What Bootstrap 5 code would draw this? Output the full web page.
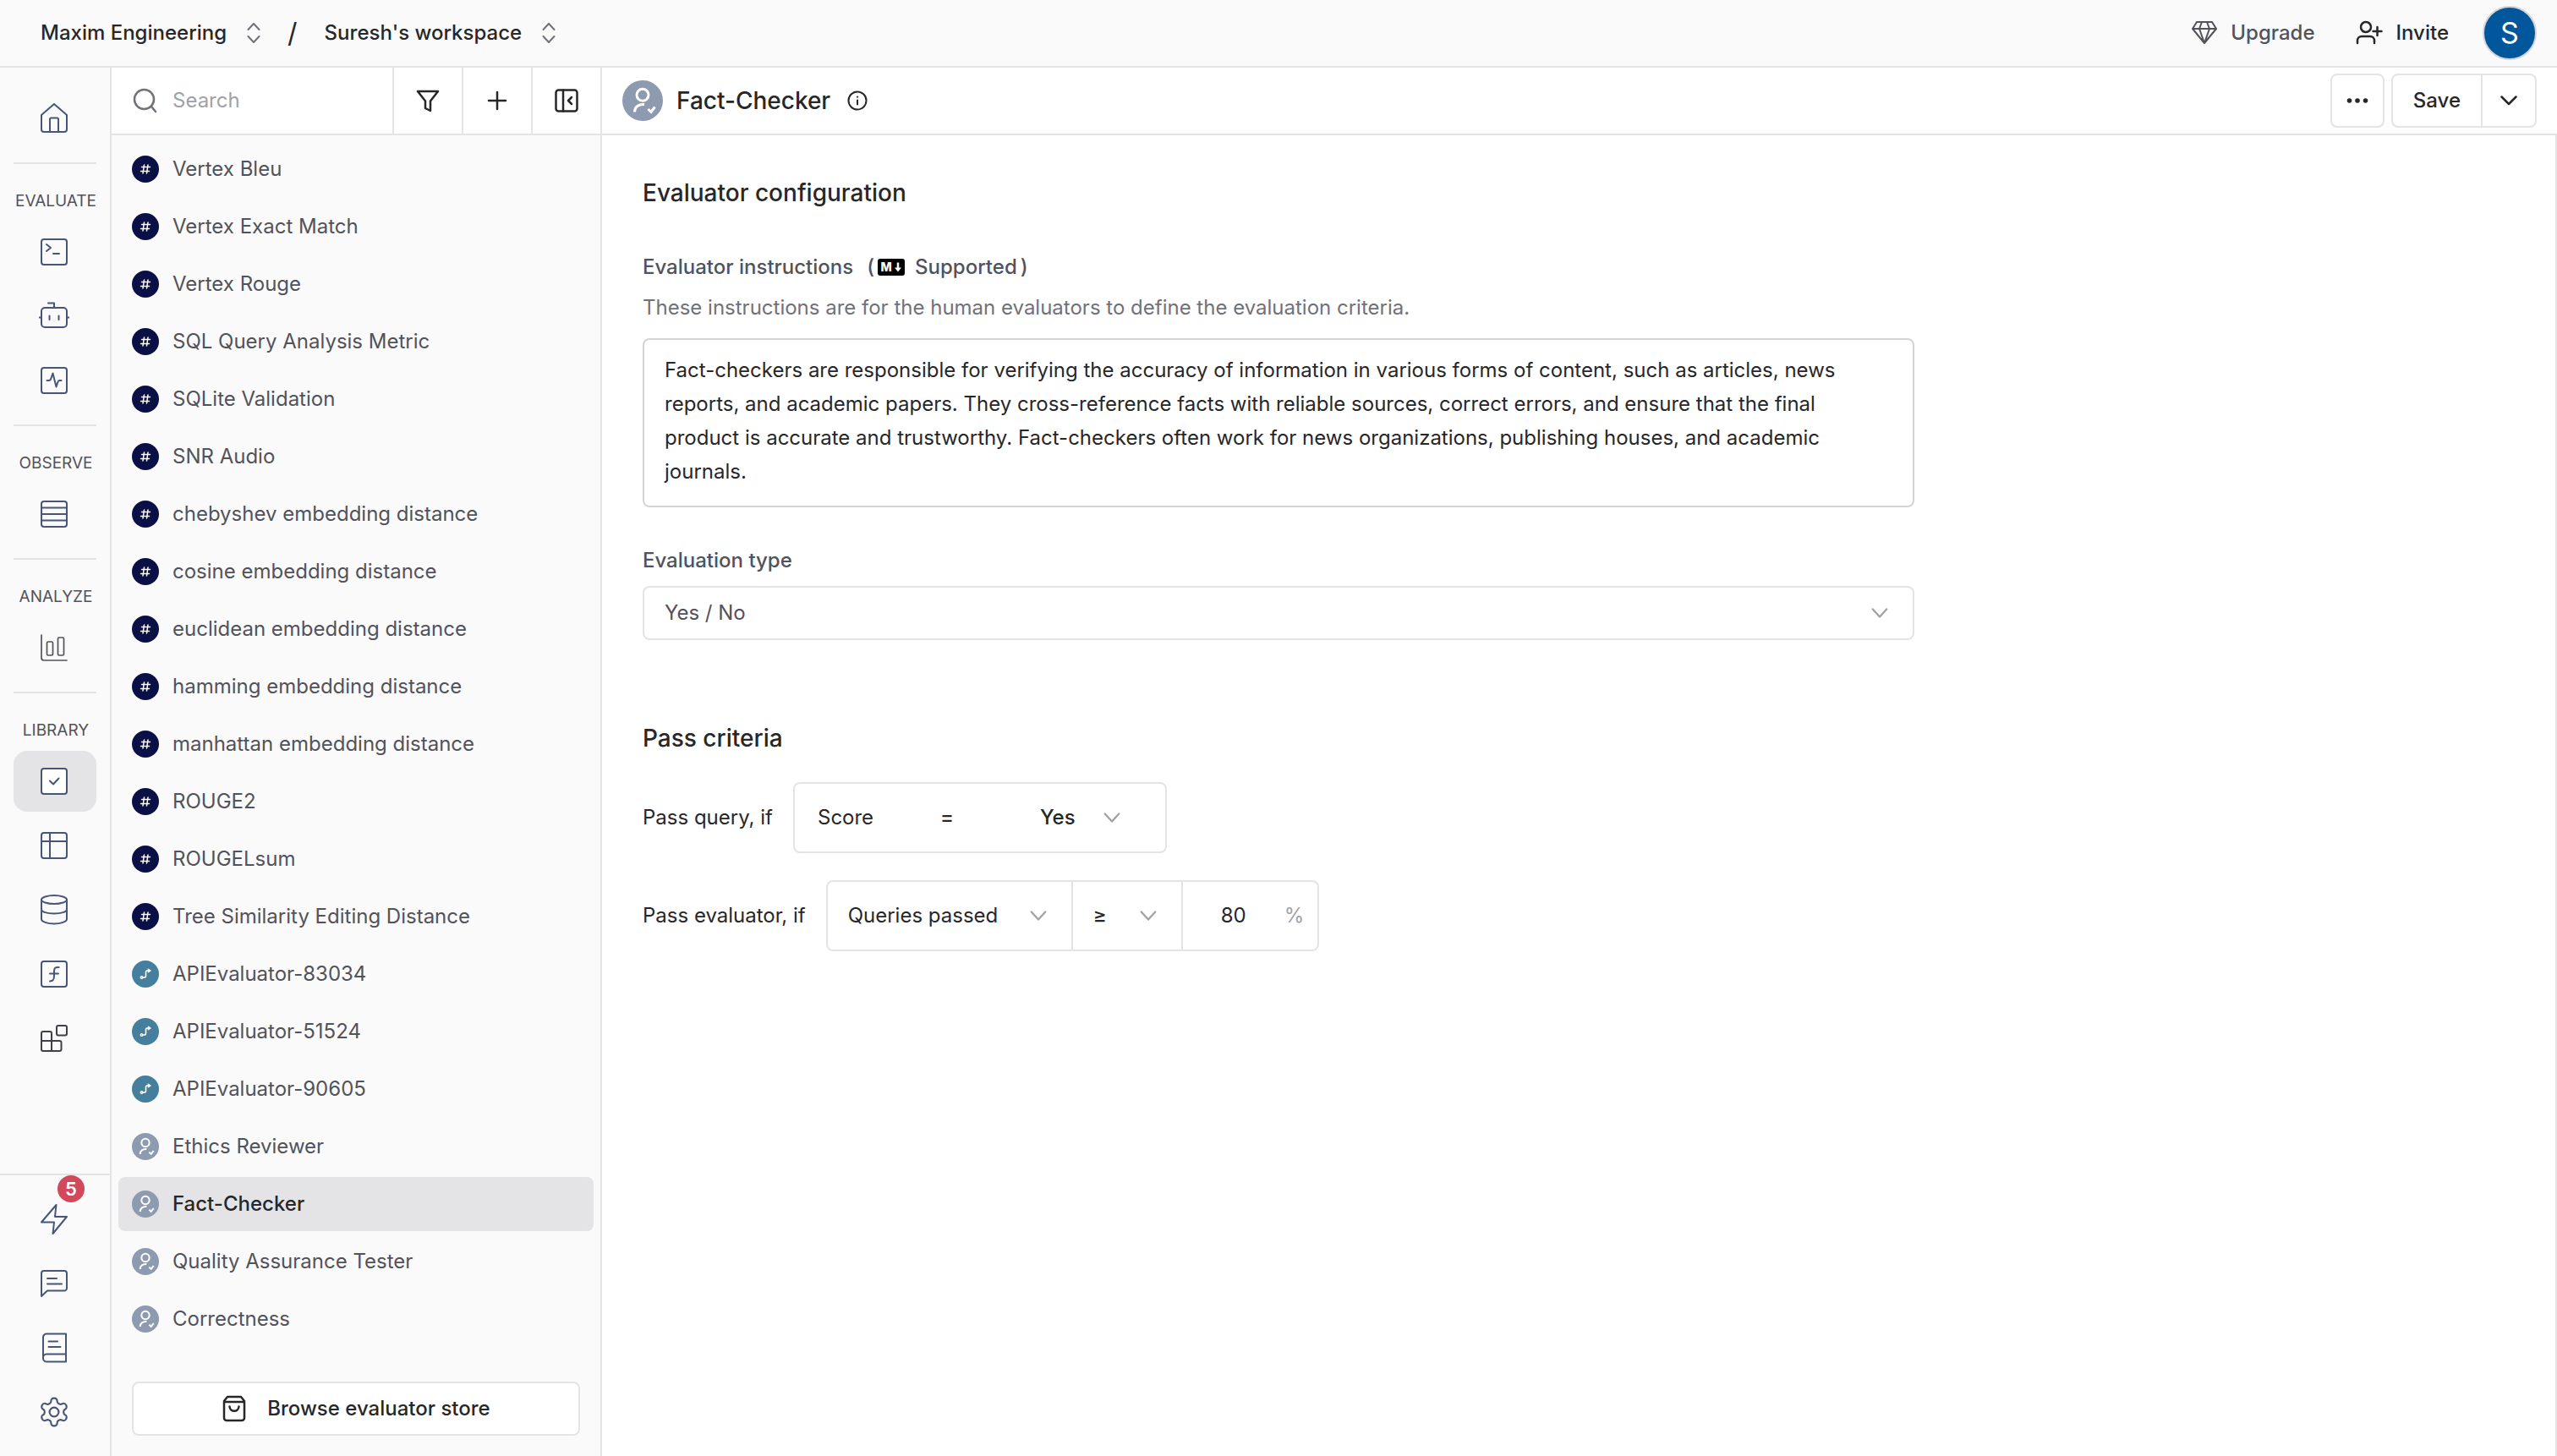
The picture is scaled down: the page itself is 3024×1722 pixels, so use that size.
<!DOCTYPE html>
<html lang="en">
<head>
<meta charset="utf-8">
<meta name="viewport" content="width=device-width, initial-scale=1">
<title>Fact-Checker</title>
<link href="https://cdn.jsdelivr.net/npm/bootstrap@5.3.0/dist/css/bootstrap.min.css" rel="stylesheet">
<script src="https://cdn.jsdelivr.net/npm/bootstrap@5.3.0/dist/js/bootstrap.bundle.min.js"></script>
<style>
:root{--line:#e4e4e7;--ink:#27272a;--soft:#52525b;--mute:#71717a;--faint:#a1a1aa;--shade:#fafafa}
body{font-family:Inter,"Liberation Sans",sans-serif;font-size:24px;line-height:40px;color:var(--ink);background:#fff}
a,a:hover{color:inherit;text-decoration:none}
svg{flex:none;fill:none;stroke:currentColor;stroke-linecap:round;stroke-linejoin:round}
svg:not([stroke-width]){stroke-width:2}
button{border:0;background:none;color:inherit;padding:0}
.fw-medium{font-weight:500}
.topbar{height:80px;background:var(--shade);border-bottom:2px solid var(--line);padding:0 24px 0 48px}
.crumb{gap:24px}
.crumb svg{color:var(--mute)}
.slash{font-size:32px;margin:0 32px}
.act{gap:16px}
.avatar-s{width:64px;height:64px;margin-left:40px;border-radius:50%;background:#01579b;border:2px solid #d4d4d8;color:#fff;font-size:34px;line-height:60px}
.rail{width:132px;background:var(--shade);border-right:2px solid var(--line);color:#475577}
.rail-nav{padding:24px 16px 0}
.rail-foot{padding:16px;border-top:2px solid var(--line)}
.rail-link{height:72px;border-radius:16px;padding-right:2px}
.rail-link svg{width:36px;height:36px}
.rail-link.active{background:var(--line)}
.rail-link.dark{color:#3f3f46}
.rail-cap{border-top:2px solid var(--line);margin-top:16px;padding:28px 0 8px 2px;font-size:19px;line-height:32px;color:var(--soft);white-space:nowrap}
.count{left:52px;top:-16px;width:32px;height:32px;border-radius:50%;background:#d1495b;color:#fff;font-size:22px;line-height:32px;font-weight:600}
.side{width:580px;background:var(--shade);border-right:2px solid var(--line)}
.bar{height:80px;background:#fff;border-bottom:2px solid var(--line)}
.search-box{min-width:0}
.search-in{border:0;outline:0;background:none;width:100%;min-width:0;padding:0;color:var(--ink)}
.search-in::placeholder{color:var(--faint);opacity:1}
.tool{border-left:2px solid var(--line);flex:none;width:82px}
.tool.slim{width:64px}
.evals{padding:8px 8px 0;gap:4px}
.eval{height:64px;border-radius:8px;padding:0 16px;gap:16px;color:var(--soft)}
.eval.active{background:var(--line);color:var(--ink);font-weight:500}
.dot{width:32px;height:32px;border-radius:50%;color:#fff;background:#0a1045}
.dot svg{width:32px;height:32px}
.dot.api{background:#457f9d}
.dot.human{background:#8e9aaf}
.dot.human svg{stroke-width:3}
.dot.big,.dot.big svg{width:48px;height:48px}
.box{border:2px solid var(--line);border-radius:8px;background:#fff}
.store{height:64px;margin:0 24px 24px;gap:24px}
.h-sec{font-size:28px;line-height:40px;font-weight:500;margin:0}
.head-pad{padding:0 24px}
.info{margin-left:20px}
.square{width:64px;height:64px}
.tall{height:64px}
.sheet{padding:48px;border-right:2px solid var(--line)}
.form-col{max-width:1504px}
.lab{color:var(--soft);font-weight:500}
.lab-first{margin-top:48px}
.lab-type{margin:43px 0 10px}
.hint{margin-top:8px;color:var(--mute)}
.sec-two{margin-top:96px}
.rule-row{margin-top:32px}
.md{background:#000;color:#fff;width:32px;height:20px;border-radius:3px;font-size:14px;line-height:20px;font-weight:800;margin:0 12px 0 4px;gap:2px}
.form-control.note{border:2px solid #d4d4d8;border-radius:8px;padding:16px 24px 20px;font-size:24px;line-height:40px;color:var(--ink);resize:none;height:200px}
.form-select.pick{--bs-form-select-bg-img:url("data:image/svg+xml,%3Csvg xmlns='http://www.w3.org/2000/svg' viewBox='0 0 24 24'%3E%3Cpath fill='none' stroke='%23a1a1aa' stroke-width='2.5' stroke-linecap='round' stroke-linejoin='round' d='m3 7 9 10 9-10'/%3E%3C/svg%3E");background-size:22px;background-color:transparent;font-size:24px;line-height:40px;color:var(--ink);border:0;border-radius:0;padding:0 48px 0 24px;background-position:right 28px center;width:auto}
.form-select.pick.type{width:100%;height:64px;border:2px solid var(--line);border-radius:8px;color:var(--soft)}
.form-select.pick.answer{width:172px;background-position:right 52px center}
.form-select.pick.metric{width:288px}
.form-select.pick.cmp{width:130px}
.rule{height:84px;overflow:hidden}
.rule-cell+.rule-cell{border-left:2px solid var(--line)}
.w-score{padding-left:27px;width:172px}
.w-eq{width:94px}
.num{border:0;outline:0;width:120px;padding:0;text-align:center;background:none;color:var(--ink)}
.pct{color:var(--faint)}
</style>
</head>
<body>
<svg class="d-none" aria-hidden="true">
<symbol id="i-hash" viewBox="0 0 32 32"><path d="M11.500 13.500h10M10.500 18.500h10M14.500 11l-1.500 10M19 11l-1.500 10" stroke-width="1.500"/></symbol>
<symbol id="i-api" viewBox="0 0 32 32"><circle cx="11.500" cy="20" r="1.300" stroke-width="1.400"/><path d="M13 20h2c1 0 1.500-.5 1.500-1.500v-5c0-1 .5-1.500 1.500-1.500h2" stroke-width="1.600"/><path d="m19.500 10 3 2-3 2z" fill="currentColor" stroke-width=".8"/></symbol>
<symbol id="i-human" viewBox="0 0 48 48"><circle cx="24" cy="17.300" r="7"/><path d="M14.500 37.500c0-6 5-9.500 11.500-9M30.500 34l3.500 3.500 4.500-6" stroke-linecap="butt" stroke-linejoin="miter"/></symbol>
<symbol id="i-updown" viewBox="0 0 16 24"><path d="m1.500 8 6.500-7 6.500 7M1.500 16l6.500 7 6.500-7"/></symbol>
</svg>

<div class="d-flex flex-column vh-100">
  <header class="topbar d-flex align-items-center">
    <button class="crumb d-flex align-items-center fw-medium">Maxim Engineering <svg width="16" height="24"><use href="#i-updown"/></svg></button>
    <span class="slash">/</span>
    <button class="crumb d-flex align-items-center fw-medium">Suresh's workspace <svg width="16" height="24"><use href="#i-updown"/></svg></button>
    <div class="d-flex align-items-center ms-auto">
      <button class="act d-flex align-items-center lab me-5"><svg width="30" height="30" viewBox="0 0 30 30"><path d="M6 2h18l5 8-14 17L1 10zM1 10h28M12 2l-3 8 6 17 6-17-3-8"/></svg>Upgrade</button>
      <button class="act d-flex align-items-center fw-medium"><svg width="32" height="30" viewBox="0 0 32 30" stroke-width="2.500"><circle cx="12" cy="8" r="6"/><path d="M2 27v-3a5 5 0 0 1 5-5h10a5 5 0 0 1 5 5v3M25.500 8v10M20.500 13h10"/></svg>Invite</button>
      <button class="avatar-s" aria-label="Account">S</button>
    </div>
  </header>

  <div class="d-flex flex-grow-1">
    <nav class="rail d-flex flex-column flex-shrink-0" aria-label="Main">
      <div class="rail-nav flex-grow-1">
        <a href="#" class="rail-link d-flex align-items-center justify-content-center" aria-label="Home"><svg viewBox="0 0 36 36"><path d="m18 1 15 13v17a3 3 0 0 1-3 3H6a3 3 0 0 1-3-3V14zM13 34V19a1.500 1.500 0 0 1 1.500-1.500h7A1.500 1.500 0 0 1 23 19v15"/></svg></a>
        <div class="rail-cap text-center">EVALUATE</div>
        <a href="#" class="rail-link d-flex align-items-center justify-content-center" aria-label="Prompts"><svg viewBox="0 0 36 36"><rect x="3" y="3" width="30" height="30" rx="3"/><path d="m9 9 5 4-5 4M17 20h7"/></svg></a>
        <a href="#" class="rail-link mt-1 d-flex align-items-center justify-content-center" aria-label="Agents"><svg viewBox="0 0 36 36"><rect x="3" y="8" width="30" height="23" rx="4"/><path d="M11 2.500h7V8M0 19.500h3M33 19.500h3M12.500 17.500v4.500M23.500 17.500v4.500"/></svg></a>
        <a href="#" class="rail-link mt-1 d-flex align-items-center justify-content-center" aria-label="Runs"><svg viewBox="0 0 36 36"><rect x="3" y="3" width="30" height="30" rx="3"/><path d="M9.500 18h2.500c1 0 1.500-.5 2-1.500l2.500-7 4 16 2-6c.4-1 1-1.500 2-1.500h2"/></svg></a>
        <div class="rail-cap text-center">OBSERVE</div>
        <a href="#" class="rail-link d-flex align-items-center justify-content-center" aria-label="Logs"><svg viewBox="0 0 36 36"><rect x="3" y="3" width="30" height="30" rx="3"/><path d="M3 10.500h30M3 18h30M3 25.500h30"/></svg></a>
        <div class="rail-cap text-center">ANALYZE</div>
        <a href="#" class="rail-link d-flex align-items-center justify-content-center lab" aria-label="Dashboards"><svg viewBox="0 0 36 36" stroke-width="1.700"><path d="M3 3v27a3 3 0 0 0 3 3h27"/><rect x="9.500" y="11" width="7" height="16" rx="1.500"/><rect x="22.500" y="6" width="7" height="21" rx="1.500"/></svg></a>
        <div class="rail-cap text-center">LIBRARY</div>
        <a href="#" class="rail-link active d-flex align-items-center justify-content-center" aria-label="Evaluators"><svg viewBox="0 0 36 36"><rect x="3" y="3" width="30" height="30" rx="3" fill="#fff"/><path d="m13 17.500 4 4 6.500-7"/></svg></a>
        <a href="#" class="rail-link mt-1 d-flex align-items-center justify-content-center" aria-label="Datasets"><svg viewBox="0 0 36 36"><rect x="3" y="3" width="30" height="30" rx="3"/><path d="M3 13h30M13 3v30"/></svg></a>
        <a href="#" class="rail-link mt-1 d-flex align-items-center justify-content-center" aria-label="Sources"><svg viewBox="0 0 36 36"><ellipse cx="18" cy="6" rx="15" ry="5"/><path d="M3 6v23c0 3 6.700 5.500 15 5.500S33 32 33 29V6M3 17.500c0 3 6.700 5 15 5s15-2 15-5"/></svg></a>
        <a href="#" class="rail-link mt-1 d-flex align-items-center justify-content-center" aria-label="Functions"><svg viewBox="0 0 36 36"><rect x="3" y="3" width="30" height="30" rx="3"/><path d="M23.500 10c-4-.6-5.500 1-5.500 4.500V20c0 4.500-1 6.500-5 6.500M13 17.500h10"/></svg></a>
        <a href="#" class="rail-link dark mt-1 d-flex align-items-center justify-content-center" aria-label="Tools"><svg viewBox="0 0 36 36"><rect x="21" y="3" width="12" height="11.500" rx="2"/><path d="M3 21v-9a2 2 0 0 1 2-2h8a2 2 0 0 1 2 2v21H5a2 2 0 0 1-2-2V21h21.500a2 2 0 0 1 2 2v8a2 2 0 0 1-2 2H15"/></svg></a>
      </div>
      <div class="rail-foot">
        <a href="#" class="rail-link position-relative d-flex align-items-center justify-content-center" aria-label="Activity, 5 new"><svg viewBox="0 0 36 36"><path d="M20.500 1 3 21.500h15L16.500 35 33 15H19z"/></svg><span class="count position-absolute text-center">5</span></a>
        <a href="#" class="rail-link mt-1 d-flex align-items-center justify-content-center" aria-label="Feedback"><svg viewBox="0 0 36 36"><path d="M3 33V6a3 3 0 0 1 3-3h24a3 3 0 0 1 3 3v17.500a3 3 0 0 1-3 3H10zM10 12h11M10 18.500h17"/></svg></a>
        <a href="#" class="rail-link mt-1 d-flex align-items-center justify-content-center" aria-label="Docs"><svg viewBox="0 0 36 36"><path d="M32 1.500H9a4 4 0 0 0-4 4V30a4 4 0 0 0 4 4.500h23zM5 30a4 4 0 0 1 4-4.500h23M11.500 10.500h10.500M11.500 17h14"/></svg></a>
        <a href="#" class="rail-link mt-1 d-flex align-items-center justify-content-center" aria-label="Settings"><svg viewBox="1 1.200 22 21.600" stroke-width="1.300"><path d="M12.220 2h-.44a2 2 0 0 0-2 2v.18a2 2 0 0 1-1 1.730l-.43.25a2 2 0 0 1-2 0l-.15-.08a2 2 0 0 0-2.730.73l-.22.38a2 2 0 0 0 .73 2.730l.15.1a2 2 0 0 1 1 1.720v.51a2 2 0 0 1-1 1.740l-.15.09a2 2 0 0 0-.73 2.730l.22.38a2 2 0 0 0 2.730.73l.15-.08a2 2 0 0 1 2 0l.43.25a2 2 0 0 1 1 1.730V20a2 2 0 0 0 2 2h.44a2 2 0 0 0 2-2v-.18a2 2 0 0 1 1-1.730l.43-.25a2 2 0 0 1 2 0l.15.08a2 2 0 0 0 2.730-.73l.22-.39a2 2 0 0 0-.73-2.730l-.15-.08a2 2 0 0 1-1-1.740v-.5a2 2 0 0 1 1-1.740l.15-.09a2 2 0 0 0 .73-2.730l-.22-.38a2 2 0 0 0-2.730-.73l-.15.08a2 2 0 0 1-2 0l-.43-.25a2 2 0 0 1-1-1.730V4a2 2 0 0 0-2-2z"/><circle cx="12" cy="12" r="3.300"/></svg></a>
      </div>
    </nav>

    <aside class="side d-flex flex-column flex-shrink-0">
      <div class="bar d-flex align-items-stretch">
        <label class="search-box d-flex align-items-center flex-grow-1 ps-4 gap-3"><svg width="32" height="32" viewBox="0 0 32 32" stroke-width="2.500" color="#71717a"><circle cx="14.500" cy="14.500" r="11.500"/><path d="m23 23 5 6"/></svg><input class="search-in" type="search" placeholder="Search" aria-label="Search"></label>
        <button class="tool d-flex align-items-center justify-content-center" aria-label="Filter"><svg width="28" height="28" viewBox="0 0 28 28" stroke-width="2.500"><path d="M2 3h24L17 14.500V26l-6-3v-8.500z"/></svg></button>
        <button class="tool d-flex align-items-center justify-content-center" aria-label="Add"><svg width="24" height="24" viewBox="0 0 24 24" stroke-width="2.500"><path d="M12 2v20M2 12h20"/></svg></button>
        <button class="tool d-flex align-items-center justify-content-center" aria-label="Collapse"><svg width="28" height="28" viewBox="0 0 28 28" stroke-width="2.500"><rect x="1.500" y="1.500" width="25" height="25" rx="3"/><path d="M10 1.500v25M20 10l-4 4 4 4"/></svg></button>
      </div>
      <div class="evals d-flex flex-column flex-grow-1">
        <a href="#" class="eval d-flex align-items-center"><span class="dot d-flex"><svg><use href="#i-hash"/></svg></span>Vertex Bleu</a>
        <a href="#" class="eval d-flex align-items-center"><span class="dot d-flex"><svg><use href="#i-hash"/></svg></span>Vertex Exact Match</a>
        <a href="#" class="eval d-flex align-items-center"><span class="dot d-flex"><svg><use href="#i-hash"/></svg></span>Vertex Rouge</a>
        <a href="#" class="eval d-flex align-items-center"><span class="dot d-flex"><svg><use href="#i-hash"/></svg></span>SQL Query Analysis Metric</a>
        <a href="#" class="eval d-flex align-items-center"><span class="dot d-flex"><svg><use href="#i-hash"/></svg></span>SQLite Validation</a>
        <a href="#" class="eval d-flex align-items-center"><span class="dot d-flex"><svg><use href="#i-hash"/></svg></span>SNR Audio</a>
        <a href="#" class="eval d-flex align-items-center"><span class="dot d-flex"><svg><use href="#i-hash"/></svg></span>chebyshev embedding distance</a>
        <a href="#" class="eval d-flex align-items-center"><span class="dot d-flex"><svg><use href="#i-hash"/></svg></span>cosine embedding distance</a>
        <a href="#" class="eval d-flex align-items-center"><span class="dot d-flex"><svg><use href="#i-hash"/></svg></span>euclidean embedding distance</a>
        <a href="#" class="eval d-flex align-items-center"><span class="dot d-flex"><svg><use href="#i-hash"/></svg></span>hamming embedding distance</a>
        <a href="#" class="eval d-flex align-items-center"><span class="dot d-flex"><svg><use href="#i-hash"/></svg></span>manhattan embedding distance</a>
        <a href="#" class="eval d-flex align-items-center"><span class="dot d-flex"><svg><use href="#i-hash"/></svg></span>ROUGE2</a>
        <a href="#" class="eval d-flex align-items-center"><span class="dot d-flex"><svg><use href="#i-hash"/></svg></span>ROUGELsum</a>
        <a href="#" class="eval d-flex align-items-center"><span class="dot d-flex"><svg><use href="#i-hash"/></svg></span>Tree Similarity Editing Distance</a>
        <a href="#" class="eval d-flex align-items-center"><span class="dot api d-flex"><svg><use href="#i-api"/></svg></span>APIEvaluator-83034</a>
        <a href="#" class="eval d-flex align-items-center"><span class="dot api d-flex"><svg><use href="#i-api"/></svg></span>APIEvaluator-51524</a>
        <a href="#" class="eval d-flex align-items-center"><span class="dot api d-flex"><svg><use href="#i-api"/></svg></span>APIEvaluator-90605</a>
        <a href="#" class="eval d-flex align-items-center"><span class="dot human d-flex"><svg><use href="#i-human"/></svg></span>Ethics Reviewer</a>
        <a href="#" class="eval active d-flex align-items-center"><span class="dot human d-flex"><svg><use href="#i-human"/></svg></span>Fact-Checker</a>
        <a href="#" class="eval d-flex align-items-center"><span class="dot human d-flex"><svg><use href="#i-human"/></svg></span>Quality Assurance Tester</a>
        <a href="#" class="eval d-flex align-items-center"><span class="dot human d-flex"><svg><use href="#i-human"/></svg></span>Correctness</a>
      </div>
      <button class="box store d-flex align-items-center justify-content-center fw-medium"><svg width="30" height="32" viewBox="0 0 30 32" stroke-width="2.500"><path d="M7 2h16l4 5v20a3 3 0 0 1-3 3H6a3 3 0 0 1-3-3V7zM3 8h24M9.500 13.500c.5 7 10.500 7 11 0"/></svg>Browse evaluator store</button>
    </aside>

    <main class="d-flex flex-column flex-grow-1">
      <div class="bar head-pad d-flex align-items-center">
        <span class="dot human big d-flex me-3"><svg><use href="#i-human"/></svg></span>
        <h1 class="h-sec">Fact-Checker</h1>
        <button class="info d-flex" aria-label="About"><svg width="24" height="24" viewBox="0 0 24 24"><circle cx="12" cy="12" r="10.500"/><path d="M12 11.500v5M12 7.500v.2"/></svg></button>
        <div class="d-flex ms-auto gap-2">
          <button class="box square d-flex align-items-center justify-content-center" aria-label="More"><svg width="26" height="6" viewBox="0 0 26 6"><g fill="currentColor" stroke="none"><circle cx="3.500" cy="3" r="2.800"/><circle cx="13" cy="3" r="2.800"/><circle cx="22.500" cy="3" r="2.800"/></g></svg></button>
          <div class="box tall d-flex">
            <button class="fw-medium px-4">Save</button>
            <button class="tool slim d-flex align-items-center justify-content-center" aria-label="Save options"><svg width="20" height="12" viewBox="0 0 20 12" stroke-width="2.500"><path d="m1.500 1.500 8.500 8.500 8.500-8.500"/></svg></button>
          </div>
        </div>
      </div>
      <div class="sheet flex-grow-1">
        <div class="form-col d-flex flex-column">
          <h2 class="h-sec">Evaluator configuration</h2>
          <div class="lab lab-first d-flex align-items-center">
            <label for="instr">Evaluator instructions</label>
            <span class="ms-3">(</span>
            <span class="md d-inline-flex align-items-center justify-content-center">M<svg width="10" height="14" viewBox="0 0 10 14"><path d="M5 1.500V9" stroke-width="2.500" stroke-linecap="butt"/><path d="M1 7.500h8L5 12.500z" fill="currentColor" stroke="none"/></svg></span>
            <span>Supported</span><span class="ms-1">)</span>
          </div>
          <div class="hint">These instructions are for the human evaluators to define the evaluation criteria.</div>
          <textarea id="instr" class="form-control note mt-3">Fact-checkers are responsible for verifying the accuracy of information in various forms of content, such as articles, news reports, and academic papers. They cross-reference facts with reliable sources, correct errors, and ensure that the final product is accurate and trustworthy. Fact-checkers often work for news organizations, publishing houses, and academic journals.</textarea>
          <label for="etype" class="lab lab-type">Evaluation type</label>
          <select id="etype" class="form-select pick type"><option>Yes / No</option></select>
          <h2 class="h-sec sec-two">Pass criteria</h2>
          <div class="rule-row d-flex align-items-center gap-4">
            <label for="pq">Pass query, if</label>
            <div class="box rule d-flex align-items-center">
              <span class="w-score">Score</span>
              <span class="w-eq fw-medium">=</span>
              <select id="pq" class="form-select pick answer fw-medium"><option>Yes</option></select>
            </div>
          </div>
          <div class="rule-row d-flex align-items-center gap-4">
            <label for="pe">Pass evaluator, if</label>
            <div class="box rule d-flex align-items-stretch">
              <select id="pe" class="form-select pick metric rule-cell"><option>Queries passed</option></select>
              <select class="form-select pick cmp rule-cell fw-medium" aria-label="Comparison"><option>≥</option></select>
              <div class="rule-cell d-flex align-items-center pe-3"><input class="num" type="text" value="80" aria-label="Percentage"><span class="pct">%</span></div>
            </div>
          </div>
        </div>
      </div>
    </main>
  </div>
</div>
</body>
</html>
